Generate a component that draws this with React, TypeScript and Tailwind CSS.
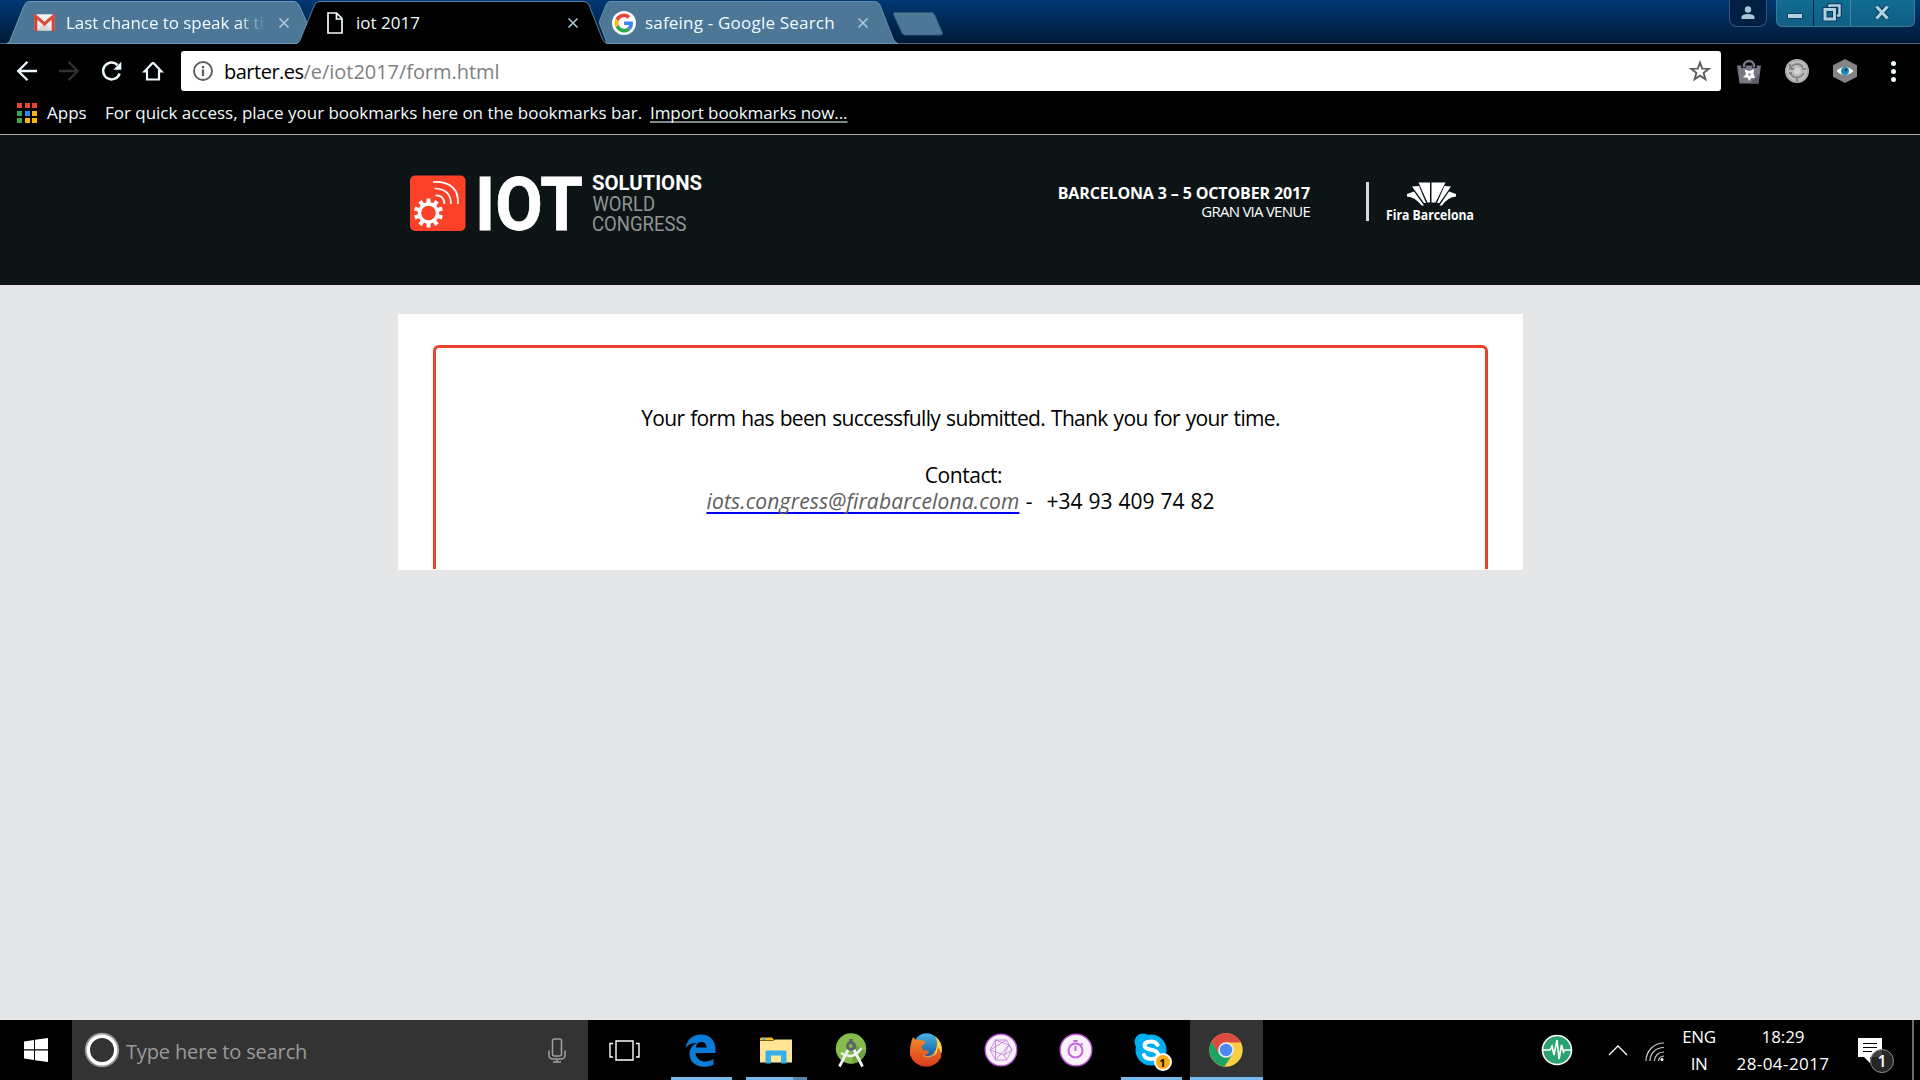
import React from 'react';

function TabClose() {
  return (
    <svg className="h-[10px] w-[10px] shrink-0" viewBox="0 0 10 10" stroke="#b3cbd9" strokeWidth="1.5" fill="none">
      <path d="M0.5 0.5 9.5 9.5M9.5 0.5 0.5 9.5" />
    </svg>
  );
}

function GmailIcon() {
  return (
    <svg className="h-[17px] w-[21px] shrink-0" viewBox="0 0 21 17">
      <rect x="0.5" y="0.5" width="20" height="16" rx="1" fill="#ececec" />
      <path d="M3 16.500 10.500 9 18 16.500z" fill="#d5d5d5" />
      <path d="M1.800 17V2l8.700 8 8.700-8v15" fill="none" stroke="#d8402f" strokeWidth="3" />
      <path d="M2 0.500h17L10.500 7z" fill="#f3f3f3" />
      <path d="M0.800 1.500 10.500 9.800 20.200 1.500" fill="none" stroke="#e04a3a" strokeWidth="2.400" />
    </svg>
  );
}

function PageIcon() {
  return (
    <svg className="h-[22px] w-[16px]" viewBox="0 0 16 22" fill="none" stroke="#f2fbff" strokeWidth="1.700">
      <path d="M1 1h8.500L15 6.500V21H1zM9.500 1v6H15" />
    </svg>
  );
}

function GoogleIcon() {
  return (
    <svg className="h-6 w-6" viewBox="0 0 24 24">
      <circle cx="12" cy="12" r="12" fill="#fff" />
      <g transform="translate(2.600 2.600) scale(0.392)">
        <path fill="#EA4335" d="M24 9.500c3.540 0 6.710 1.220 9.210 3.600l6.850-6.850C35.900 2.380 30.470 0 24 0 14.620 0 6.510 5.380 2.560 13.220l7.980 6.190C12.430 13.720 17.740 9.500 24 9.500z" />
        <path fill="#4285F4" d="M46.980 24.550c0-1.570-.15-3.090-.38-4.550H24v9.020h12.940c-.58 2.960-2.260 5.480-4.780 7.180l7.730 6c4.510-4.180 7.090-10.360 7.090-17.650z" />
        <path fill="#FBBC05" d="M10.530 28.590c-.48-1.450-.76-2.990-.76-4.590s.27-3.140.76-4.590l-7.980-6.190C.92 16.460 0 20.120 0 24s.92 7.540 2.560 10.780l7.970-6.190z" />
        <path fill="#34A853" d="M24 48c6.480 0 11.930-2.130 15.890-5.810l-7.730-6c-2.150 1.450-4.920 2.300-8.160 2.300-6.260 0-11.570-4.220-13.470-9.910l-7.980 6.190C6.510 42.620 14.620 48 24 48z" />
      </g>
    </svg>
  );
}

function TabStrip() {
  return (
    <div className="flex h-[44px] justify-between border-b border-[#48607a] bg-linear-to-b from-[#003875] to-[#001a36]">
      <div className="flex h-[44px] pl-[6px] text-[17px] text-[#f0fbff]">
        <div className="relative flex w-[302px] items-center pl-[28px]">
          <svg className="absolute inset-0 h-[44px] w-[302px]" viewBox="0 0 302 44">
            <path d="M0.500 43.500C3 43 4 41 5 38L18 6Q20 1.500 23 1.500H288Q291 1.500 293 5L302 25V43.500z" fill="#4c7797" stroke="#7398b3" />
          </svg>
          <div className="relative flex items-center pt-px">
            <GmailIcon />
            <span className="ml-[11px] w-[200px] overflow-hidden whitespace-nowrap leading-[44px] tracking-[-0.06px] [mask-image:linear-gradient(to_right,black_86%,transparent)]">
              Last chance to speak at th
            </span>
            <span className="ml-[13px]">
              <TabClose />
            </span>
          </div>
        </div>
        <div className="relative z-10 -ml-[12px] flex w-[311px] items-center pl-[31px]">
          <svg className="absolute inset-0 h-[44px] w-[311px]" viewBox="0 0 311 44">
            <path d="M0 44C3 43 4 41 5 38L18 6Q20 1.500 23 1.500H288Q291 1.500 293 5L306 38Q308 43 311 44z" fill="#000" />
            <path d="M0 43.500C3 43 4 41 5 38L18 6Q20 1.500 23 1.500H288Q291 1.500 293 5L306 38Q308 43 311 43.500" fill="none" stroke="#7398b3" strokeOpacity="0.8" />
          </svg>
          <div className="relative flex items-center pt-px">
            <PageIcon />
            <span className="ml-[13px] w-[212px] leading-[44px]">iot 2017</span>
            <TabClose />
          </div>
        </div>
        <div className="relative -ml-[8px] flex w-[299px] items-center pl-[13px]">
          <svg className="absolute inset-0 h-[44px] w-[299px]" viewBox="0 0 299 44">
            <path d="M0 22 7 5Q8.500 1.500 11 1.500H276Q279 1.500 281 5L294 38Q296 43 299 43.500H8z" fill="#4c7797" stroke="#7398b3" strokeOpacity="0.8" />
          </svg>
          <div className="relative flex items-center pt-px">
            <GoogleIcon />
            <span className="ml-[9px] w-[213px] whitespace-nowrap leading-[44px] tracking-[0.2px]">safeing - Google Search</span>
            <TabClose />
          </div>
        </div>
        <svg className="-ml-[6px] mt-[11px] h-[25px] w-[52px]" viewBox="0 0 52 25">
          <path d="M3 1.500H39.500Q41.500 1.500 42.500 3.500L50.500 22Q51 24 49 24H13Q11 24 10 22L1.500 3.500Q1 1.500 3 1.500z" fill="#4c7797" stroke="#35597a" />
        </svg>
      </div>
      <div className="flex pr-[5px]">
        <div className="mr-[9px] flex h-[27px] w-[38px] items-start justify-center rounded-b-[8px] border border-t-0 border-[#39567a] bg-[#001f42] pt-[6px]">
          <svg className="h-[14px] w-[14px]" viewBox="0 0 14 14" fill="#a9c4d6">
            <circle cx="7" cy="3.500" r="3.200" />
            <path d="M0.500 13V11Q1 8 7 8T13.500 11V13z" />
          </svg>
        </div>
        <div className="flex h-[27px] overflow-hidden rounded-b-[6px] border border-t-0 border-[#3c7794] bg-linear-to-b from-[#126c91] to-[#105f86]">
          <div className="flex w-[37px] justify-center border-r border-[#02203c] pt-[13px]">
            <div className="h-[6px] w-[16px] rounded-[1px] border border-[#0a4162] bg-[#b0d2df]" />
          </div>
          <div className="flex w-[37px] justify-center border-r border-[#3f86a4] pt-[3px]">
            <svg className="h-[19px] w-[20px]" viewBox="0 0 20 19" fill="none">
              <path d="M7.500 5V2.500H17.500V12.500H15" stroke="#0a3856" strokeWidth="4.600" />
              <rect x="3" y="6.500" width="9.500" height="9.500" stroke="#0a3856" strokeWidth="4.800" />
              <path d="M7.500 4V2.500H17.500V12.500H15" stroke="#b0d2df" strokeWidth="2.400" />
              <rect x="3" y="6.500" width="9.500" height="9.500" stroke="#b0d2df" strokeWidth="3" />
            </svg>
          </div>
          <div className="flex w-[63px] justify-center pr-[2px] pt-[5px]">
            <svg className="h-[15px] w-[16px]" viewBox="0 0 16 15" fill="none">
              <path d="M2.500 1.500 13.500 13.500M13.500 1.500 2.500 13.500" stroke="#0a3856" strokeWidth="5" />
              <path d="M2.500 1.500 13.500 13.500M13.500 1.500 2.500 13.500" stroke="#b0d2df" strokeWidth="3.200" />
            </svg>
          </div>
        </div>
      </div>
    </div>
  );
}

function Toolbar() {
  return (
    <div className="flex h-[54px] items-center bg-black pl-[16px]">
      <div className="flex w-[165px] items-center gap-[20px]">
        <svg className="h-[22px] w-[22px]" viewBox="0 0 22 22" fill="none" stroke="#eefbff" strokeWidth="2.300">
          <path d="M21 11H2.500M11.500 1.700 2.200 11l9.300 9.300" />
        </svg>
        <svg className="h-[22px] w-[22px]" viewBox="0 0 22 22" fill="none" stroke="#303232" strokeWidth="2.300">
          <path d="M1 11H19.500M10.500 1.700 19.800 11l-9.300 9.300" />
        </svg>
        <svg className="h-[22px] w-[22px]" viewBox="0 0 22 22" fill="none" stroke="#eefbff" strokeWidth="2.500">
          <path d="M19.600 13.500A8.400 8.400 0 1 1 17.500 5" />
          <path d="M21.300 1.800V9.800H13.300z" fill="#eefbff" stroke="none" />
        </svg>
        <svg className="h-[22px] w-[22px]" viewBox="0 0 22 22" fill="none" stroke="#eefbff" strokeWidth="2.200">
          <path d="M5 10V19.500H17V10M11 2.600 2.500 11.500H5.500M11 2.600 19.500 11.500H16.500" />
        </svg>
      </div>
      <div className="flex h-[40px] w-[1540px] items-center justify-between rounded-[3px] bg-white pl-[12px] pr-[10px]">
        <div className="flex items-center">
          <svg className="h-[20px] w-[20px]" viewBox="0 0 20 20" fill="none" stroke="#5e5e5e">
            <circle cx="10" cy="10" r="9" strokeWidth="1.900" />
            <path d="M10 8.500V15M10 5V7.200" strokeWidth="2.300" />
          </svg>
          <span className="ml-[11px] mt-px whitespace-nowrap text-[20px] leading-[40px] tracking-[-0.05px] text-[#808080]">
            <span className="tracking-[-0.5px] text-black">barter.es</span>/e/iot2017/form.html
          </span>
        </div>
        <svg className="h-[22px] w-[22px]" viewBox="0 0 22 22" fill="none" stroke="#5e5e5e" strokeWidth="1.900">
          <path d="M11 2.600 13.200 8.600 19.700 8.900 14.600 12.900 16.400 19.200 11 15.600 5.600 19.200 7.400 12.900 2.300 8.900 8.800 8.600z" />
        </svg>
      </div>
      <div className="flex items-center pl-[16px]">
        <svg className="h-[25px] w-6 shrink-0" viewBox="0 0 24 25">
          <path d="M0 6.500H24L21.500 24.500H2.500z" fill="#777786" />
          <path d="M22.800 14 13 24.500H21.500z" fill="#5e5e6c" />
          <path d="M6.500 9V7a5.500 5.500 0 0 1 11 0V9" fill="none" stroke="#000" strokeWidth="4.500" />
          <path d="M7 8.500V7a5 5 0 0 1 10 0V8.500" fill="none" stroke="#777786" strokeWidth="2.400" />
          <path d="M7.500 10.500 12.500 12 17 10 16.500 14.500 18 19 14.500 19 12 22 10.500 18.500 6 18.500 9 15z" fill="#fff" />
          <circle cx="12.500" cy="15.500" r="1.200" fill="#888894" />
        </svg>
        <svg className="ml-6 h-6 w-6" viewBox="0 0 24 24" fill="none">
          <circle cx="12" cy="12" r="12" fill="#bdbdbd" />
          <circle cx="12" cy="12" r="11" stroke="#a2a2a2" />
          <path d="M5.500 9.500a7 7 0 0 1 12.500-1M18.500 14a7 7 0 0 1-13 0M5 5v5h5M12 18.500V23M7 14h-3M17 10h4" stroke="#858585" strokeWidth="2" />
          <circle cx="12" cy="12" r="3.300" fill="#d4d4d4" />
        </svg>
        <svg className="ml-6 h-6 w-6" viewBox="0 0 24 24">
          <path d="M12 0 24 6.200V17.800L12 24 0 17.800V6.200z" fill="#858383" />
          <path d="M3.500 12Q12 4 20.500 12 12 20 3.500 12z" fill="#fff" />
          <circle cx="12" cy="12" r="4" fill="#1d8cb8" />
          <circle cx="13" cy="11" r="1.400" fill="#0c3e55" />
        </svg>
        <div className="ml-[34px] flex flex-col gap-[3px]">
          <i className="h-[5px] w-[5px] rounded-full bg-[#e8fbff]" />
          <i className="h-[5px] w-[5px] rounded-full bg-[#e8fbff]" />
          <i className="h-[5px] w-[5px] rounded-full bg-[#e8fbff]" />
        </div>
      </div>
    </div>
  );
}

function BookmarksBar() {
  return (
    <div className="flex h-[37px] items-start border-b border-[#a8a8a8] bg-black pl-[17px] text-[17px] leading-[30px] text-[#f0fbff]">
      <div className="mt-[5px] grid grid-cols-3 gap-[2.5px] [&>i]:h-[5px] [&>i]:w-[5px]">
        <i className="bg-[#ea4335]" /><i className="bg-[#ea4335]" /><i className="bg-[#ea4335]" />
        <i className="bg-[#34a853]" /><i className="bg-[#2f86f5]" /><i className="bg-[#fbb410]" />
        <i className="bg-[#34a853]" /><i className="bg-[#fbb410]" /><i className="bg-[#fbb410]" />
      </div>
      <span className="ml-[10px] w-[58px]">Apps</span>
      <span className="w-[545px] whitespace-nowrap tracking-[-0.02px]">For quick access, place your bookmarks here on the bookmarks bar.</span>
      <span className="whitespace-nowrap tracking-[-0.07px] underline decoration-[#7e8789] decoration-2 underline-offset-[2px] [text-decoration-skip-ink:none]">
        Import bookmarks now...
      </span>
    </div>
  );
}

const teeth = [0, 36, 72, 108, 144, 180, 216, 252, 288, 324];

function IotLogo() {
  return (
    <svg className="h-[58px] w-[300px] overflow-visible" viewBox="0 0 300 58" fontFamily="Roboto, sans-serif">
      <rect x="0" y="0.500" width="55.500" height="55.500" rx="5" fill="#fb4229" />
      <g transform="translate(18.500 38)" stroke="#fff" fill="none">
        <circle r="9" strokeWidth="3.400" />
        {teeth.map((a) => (
          <path key={a} d="M0-10V-14.500" strokeWidth="4" transform={`rotate(${a})`} />
        ))}
      </g>
      <path d="M25.500 20.500Q34 20 34.500 29M24.500 13.500Q41 14 41 29M23 7Q49 6 48 29" fill="none" stroke="#fff" strokeWidth="1.700" />
      <text x="65" y="54.500" textLength="108" lengthAdjust="spacingAndGlyphs" fill="#fff" stroke="#fff" strokeWidth="0.800" fontWeight="700" fontSize="75">IOT</text>
      <text x="182" y="15.300" textLength="110" lengthAdjust="spacingAndGlyphs" fill="#fff" fontWeight="700" fontSize="20">SOLUTIONS</text>
      <text x="182.500" y="36" textLength="62.500" lengthAdjust="spacingAndGlyphs" fill="#8f9495" fontSize="19.500">WORLD</text>
      <text x="182" y="56" textLength="94.500" lengthAdjust="spacingAndGlyphs" fill="#8f9495" fontSize="19.500">CONGRESS</text>
    </svg>
  );
}

function FiraLogo() {
  return (
    <svg className="h-[46px] w-[92px]" viewBox="0 0 92 46" fill="#fff">
      <path d="M32.500 0.500H44V20.500H41.500z" />
      <path d="M59.500 0.500H45.500V20.500H49.500z" />
      <path d="M26 4.500 33 4 40 21H38z" />
      <path d="M65 4.500 58.500 4 51 21H53.500z" />
      <path d="M21 12 28 9.500 38 23.500 35.500 23.500Q29 15 21 14.500z" />
      <path d="M70 12 63 9.500 53.500 23.500 56 23.500Q62 15 70 14.500z" />
      <text x="0" y="38" fontFamily="Open Sans, sans-serif" fontWeight="700" fontSize="15" textLength="88" lengthAdjust="spacingAndGlyphs">Fira Barcelona</text>
    </svg>
  );
}

function SiteHeader() {
  return (
    <header className="flex h-[150px] items-start justify-between bg-[#0c1416] pl-[410px] pr-[442px] pt-[40px] text-white">
      <IotLogo />
      <div className="flex pt-[7px]">
        <div className="w-[254px] pr-px pt-px text-right">
          <div className="whitespace-nowrap text-[16px] font-bold leading-[20px] tracking-[-0.14px]">BARCELONA 3 – 5 OCTOBER 2017</div>
          <div className="whitespace-nowrap text-[15px] leading-[16px] tracking-[-0.75px]">GRAN VIA VENUE</div>
        </div>
        <div className="ml-[55px] h-[39px] w-[3px] bg-[#d9dbdb]" />
        <div className="ml-[17px]">
          <FiraLogo />
        </div>
      </div>
    </header>
  );
}

function Taskbar() {
  return (
    <footer className="flex h-[60px] bg-black text-white">
      <div className="flex w-[72px] items-center justify-center">
        <svg className="h-6 w-6" viewBox="0 0 24 24" fill="#fff">
          <path d="M0 3.400 10 2V11.300H0zM11 1.850 24 0V11.300H11zM0 12.400H10V22L0 20.600zM11 12.400H24V24L11 22.150z" />
        </svg>
      </div>
      <div className="flex w-[516px] items-center bg-[#333333] pl-[12px]">
        <svg className="h-[36px] w-[36px]" viewBox="0 0 36 36" fill="none">
          <circle cx="18" cy="18" r="16" stroke="#9a9a9a" strokeWidth="2.400" />
          <circle cx="18" cy="18" r="13.700" stroke="#fff" strokeWidth="3.400" />
        </svg>
        <span className="ml-[6px] mt-[3px] w-[422px] whitespace-nowrap text-[20px] leading-[28px] tracking-[-0.15px] text-[#9a9a9a]">Type here to search</span>
        <svg className="h-[25px] w-[18px]" viewBox="0 0 18 25" fill="none" stroke="#a0a0a0" strokeWidth="1.500">
          <rect x="4.500" y="1" width="9" height="17" rx="2" />
          <path d="M1 12.500V18Q1.500 21 5 21H13Q16.500 21 17 18V12.500M9 21V24M5 24H13" />
        </svg>
      </div>
      <div className="flex w-[75px] items-center justify-center pr-[3px]">
        <svg className="h-[21px] w-[31px]" viewBox="0 0 31 21" fill="none" stroke="#fff" strokeWidth="1.400">
          <path d="M7 1H24V20H7zM4 3.500H1V17H4M27 3.500H30V17H27" />
        </svg>
      </div>

      <div className="flex w-[75px] flex-col items-center">
        <div className="flex h-[57px] items-center pt-[3px]">
          <svg className="h-[33px] w-[31px]" viewBox="0 0 31 33" fill="#0b7bd8">
            <path d="M0.500 14C2 4.500 9 0.500 16 0.500 25.500 0.500 30.500 7.500 30.500 15V19H10.500C11 25 16 27.500 20.500 27.500 23.500 27.500 26.500 26.500 28.500 25V30.500C26 32 22.500 32.800 19 32.800 10 32.800 4.500 27 4.500 20 4.500 14.500 7.500 11 12 9 7 8.500 3 10.500 0.500 14zM10.800 13.500H21.500C21.500 10 19.500 8 16.500 8 13.500 8 11.200 10 10.800 13.500z" />
          </svg>
        </div>
        <div className="ml-[2px] h-[3px] w-[61px] bg-[#76b9ed]" />
      </div>
      <div className="flex w-[75px] flex-col items-center">
        <div className="flex h-[57px] items-center pt-[3px]">
          <svg className="h-[27px] w-[32px]" viewBox="0 0 32 27">
            <path d="M0 2Q0 0.500 1.500 0.500H12L14.500 3.500H0z" fill="#fcc22d" />
            <path d="M2 2H6" stroke="#4db8e8" strokeWidth="1.500" />
            <path d="M0 4H13L15 2.500H32V25.500H0z" fill="#ffe594" />
            <path d="M5.500 26.500V15Q5.500 13.500 7 13.500H25Q26.500 13.500 26.500 15V26.500H21V18.500H11V26.500z" fill="#35b0ea" />
          </svg>
        </div>
        <div className="ml-[2px] flex h-[3px] w-[61px]">
          <div className="w-[47px] bg-[#76b9ed]" />
          <div className="w-[14px] bg-[#5485ab]" />
        </div>
      </div>
      <div className="flex w-[75px] items-center justify-center">
        <svg className="h-[36px] w-[32px]" viewBox="0 0 32 36">
          <circle cx="16" cy="16.500" r="15.200" fill="#84bd4b" />
          <path d="M16 9 31 20A15.200 15.200 0 0 1 18 31.500z" fill="#6ea33b" />
          <path d="M14 16 4.500 34.500M18 16 27.500 34.500" stroke="#f2f2f2" strokeWidth="2.800" />
          <path d="M6 21Q18 29 26.500 16" stroke="#f2f2f2" strokeWidth="2.400" fill="none" />
          <circle cx="16" cy="14" r="3.600" fill="none" stroke="#5b646b" strokeWidth="3" />
          <path d="M16 7V11" stroke="#5b646b" strokeWidth="3.500" />
        </svg>
      </div>
      <div className="flex w-[75px] items-center justify-center">
        <svg className="h-[34px] w-[34px]" viewBox="0 0 34 34">
          <defs>
            <linearGradient id="fox" x1="0" y1="0" x2="0" y2="1">
              <stop offset="0" stopColor="#f58b2b" />
              <stop offset="1" stopColor="#d93a1d" />
            </linearGradient>
            <linearGradient id="globe" x1="0" y1="0" x2="0" y2="1">
              <stop offset="0" stopColor="#46b4e4" />
              <stop offset="1" stopColor="#124e90" />
            </linearGradient>
          </defs>
          <circle cx="17.500" cy="13.500" r="13.200" fill="url(#globe)" />
          <path d="M26 3Q34 9 33 19L28 25 24 22Q31 12 26 3z" fill="#f8cf3c" />
          <path d="M4 4 7 7Q10 6 13 7.500L16 8Q17 11 12.500 13L14 17Q18 17 20 19 18 22.500 14.500 22.500 20 27 26 22 29 19 28.500 14 33.500 19 32 24.500 27 33.800 17 33.800 5 33 1 22 0.500 12 4 4z" fill="url(#fox)" />
          <path d="M14.500 22.500Q21 26 26.500 20" stroke="#f9a33b" strokeWidth="1.200" fill="none" />
        </svg>
      </div>
      <div className="flex w-[75px] items-center justify-center">
        <svg className="h-[34px] w-[34px]" viewBox="0 0 34 34" fill="none" stroke="#c480e2">
          <circle cx="17" cy="17" r="15.800" fill="#f6f2f8" stroke="#c455e0" strokeWidth="1.400" />
          <path d="M11.500 7H22.500L28 17 22.500 27H11.500L6 17zM11.500 7 25 12 28 17M22.500 7 6 17 20 22 28 17M11.500 7V27L25 12 20 22 22.500 27" strokeWidth="0.900" />
        </svg>
      </div>
      <div className="flex w-[75px] items-center justify-center">
        <svg className="h-[34px] w-[34px]" viewBox="0 0 34 34" fill="none" stroke="#c663e2">
          <circle cx="17" cy="17" r="15.800" fill="#f6f2f8" stroke="#c455e0" strokeWidth="1.400" />
          <circle cx="16.500" cy="17.500" r="7" strokeWidth="2" />
          <path d="M16.500 13V18M14.500 8H18.500M22 10.500 23.500 12" strokeWidth="2" />
        </svg>
      </div>
      <div className="flex w-[75px] flex-col items-center">
        <div className="flex h-[57px] items-center pt-[3px]">
          <div className="relative">
            <svg className="h-[34px] w-[34px]" viewBox="0 0 34 34">
              <circle cx="17" cy="17" r="15.500" fill="#00aff0" />
              <circle cx="9" cy="9" r="8.500" fill="#00aff0" />
              <circle cx="25" cy="25" r="8.500" fill="#00aff0" />
              <path d="M23.500 12Q22 8.500 17 8.500 10.500 8.500 10.500 12.500 10.500 15.500 17 16.700 24 18 24 21.500 24 26 17 26 11 26 9.800 21.800" fill="none" stroke="#fff" strokeWidth="4" strokeLinecap="round" />
            </svg>
            <div className="absolute left-[20px] top-[20px] flex h-[18px] w-[18px] items-center justify-center rounded-full border-2 border-white bg-[#ffaa10] text-[11px] font-bold leading-none text-black">1</div>
          </div>
        </div>
        <div className="ml-[2px] h-[3px] w-[61px] bg-[#76b9ed]" />
      </div>
      <div className="flex w-[75px] flex-col items-center pl-[2px]">
        <div className="flex h-[57px] w-[73px] items-center justify-center bg-[#333333] pr-px pt-[3px]">
          <svg className="h-[34px] w-[34px]" viewBox="0 0 34 34">
            <circle cx="17" cy="17" r="16.700" fill="#fcd045" />
            <path d="M2.500 8.700A16.700 16.700 0 0 1 31.900 9.500H17L9.700 20.800z" fill="#dc4c3f" />
            <path d="M2.500 8.700A16.700 16.700 0 0 0 15.500 33.600L23.500 21.200 10.300 21.200z" fill="#1ea362" />
            <circle cx="17" cy="17" r="7.800" fill="#f1f1f1" />
            <circle cx="17" cy="17" r="6.200" fill="#4a8af5" />
          </svg>
        </div>
        <div className="h-[3px] w-[73px] bg-[#76b9ed]" />
      </div>

      <div className="flex flex-1 items-center pl-[278px]">
        <svg className="h-[32px] w-[32px]" viewBox="0 0 32 32">
          <circle cx="16" cy="16" r="14.500" fill="#2ba36f" stroke="#fff" strokeWidth="1.600" />
          <path d="M2 16H9L11 12 13 21 16 6 18 25 20.500 11 22.500 18 24 16H30" fill="none" stroke="#fff" strokeWidth="1.600" />
        </svg>
        <svg className="ml-[35px] h-[11px] w-[20px]" viewBox="0 0 20 11" fill="none" stroke="#fff" strokeWidth="1.300">
          <path d="M1 10 10 1 19 10" />
        </svg>
        <svg className="ml-[17px] mt-[2px] h-[19px] w-[19px]" viewBox="0 0 19 19" fill="none" stroke="#c8c8c8" strokeWidth="1.200">
          <path d="M1 19C1 9 9 1 19 1M5 19C5 11 11 5.500 19 5.500M9.500 19C9.500 13.500 13.500 10 19 10M13.500 19Q14 14.500 19 14" />
          <circle cx="17" cy="17.500" r="1.500" fill="#fff" stroke="none" />
        </svg>
        <div className="ml-[11px] flex w-[48px] flex-col items-center text-[17px] leading-[27px] tracking-[-0.4px]">
          <span>ENG</span>
          <span>IN</span>
        </div>
        <div className="ml-[5px] flex w-[110px] flex-col items-center whitespace-nowrap text-[17px] leading-[27px]">
          <span className="tracking-[-0.1px]">18:29</span>
          <span className="tracking-[0.43px]">28-04-2017</span>
        </div>
        <div className="relative ml-[20px]">
          <svg className="h-[26px] w-[26px]" viewBox="0 0 26 26">
            <path d="M0 1H24V20H12V26L6 20H0z" fill="#fff" />
            <path d="M5 6.500H19M5 10.500H19M5 14.500H14" stroke="#000" strokeWidth="1.200" />
          </svg>
          <div className="absolute left-[12px] top-[12px] flex h-[24px] w-[24px] items-center justify-center rounded-full border border-[#8d8d8d] bg-[#2b2b2b]/90 text-[16px] font-semibold leading-none">1</div>
        </div>
      </div>
      <div className="mr-[6px] w-[2px] bg-[#6a6a6a]" />
    </footer>
  );
}

export default function App() {
  return (
    <div className="flex h-[1080px] w-[1920px] flex-col overflow-hidden bg-[#e5e6e8] font-['Open_Sans',sans-serif]">
      <TabStrip />
      <Toolbar />
      <BookmarksBar />
      <SiteHeader />
      <main className="flex flex-1 flex-col items-start pl-[398px] pt-[29px]">
        <div className="h-[256px] w-[1125px] bg-white pl-[35px] pt-[31px]">
          <div className="h-[224px] w-[1055px] rounded-t-[6px] border-3 border-b-0 border-[#e9412c] pt-[57px] text-center text-[21px] leading-[26px] text-black">
            <p className="tracking-[-0.66px] [word-spacing:1.1px]">Your form has been successfully submitted. Thank you for your time.</p>
            <p className="mt-[31px] pl-[6px] tracking-[-0.45px]">Contact:</p>
            <p className="flex justify-center whitespace-pre">
              <a className="italic tracking-[0.17px] text-[#5e5e5e] underline decoration-[#0000ee] decoration-2 underline-offset-[3px] [text-decoration-skip-ink:none]">iots.congress@firabarcelona.com</a>
              <span className="ml-[1px]">{' -'}</span>
              <span className="ml-[14px] tracking-[-0.05px] [word-spacing:0.7px]">+34 93 409 74 82</span>
            </p>
          </div>
        </div>
      </main>
      <Taskbar />
    </div>
  );
}
